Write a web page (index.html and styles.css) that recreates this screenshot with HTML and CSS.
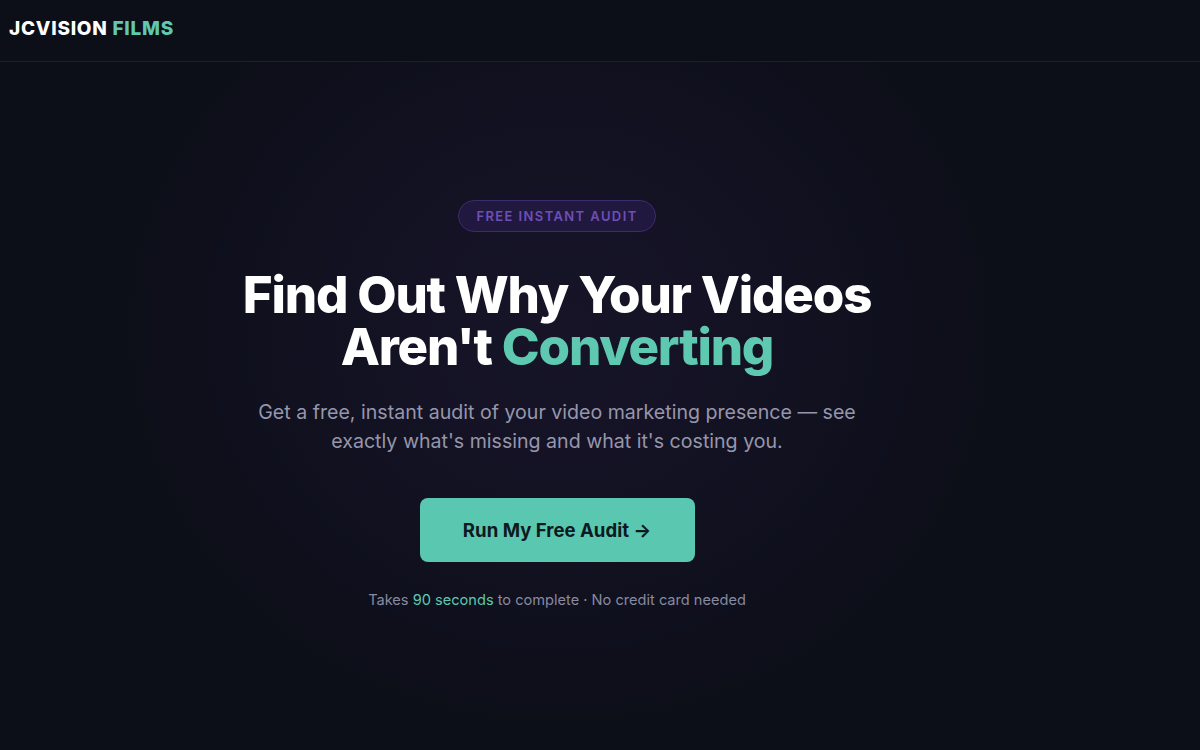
FILE: index.html
```html
<!DOCTYPE html>
<html lang="en">
<head>
<meta charset="utf-8">
<title>JCVision Films — Free Video Audit</title>
<link rel="stylesheet" href="styles.css">
</head>
<body>
<header class="topbar">
  <div class="logo">JCVISION <span class="accent">FILMS</span></div>
</header>
<main class="hero">
  <div class="badge">FREE INSTANT AUDIT</div>
  <h1 class="headline">Find Out Why Your Videos<br>Aren't <span class="accent">Converting</span></h1>
  <p class="sub">Get a free, instant audit of your video marketing presence — see exactly what's missing and what it's costing you.</p>
  <a class="cta" href="#">Run My Free Audit →</a>
  <p class="note">Takes <span class="accent">90 seconds</span> to complete · No credit card needed</p>
</main>
</body>
</html>
```
FILE: styles.css
```css
* { box-sizing: border-box; }
html, body { margin: 0; padding: 0; }
body {
  width: 1200px;
  height: 750px;
  overflow: hidden;
  font-family: Inter, "Noto Sans", sans-serif;
  color: #ffffff;
  background-color: #0c0e18;
  background-image: radial-gradient(ellipse 440px 400px at 560px 330px, #171428 0%, #131223 45%, #0c0e18 100%);
}
.accent { color: #5ec8b0; }
.topbar {
  height: 62px;
  border-bottom: 1px solid #1d1f2c;
  display: flex;
  align-items: center;
  padding: 0 9px;
  background: #0c0e18;
}
.logo {
  font-size: 19px;
  font-weight: 800;
  letter-spacing: 0.75px;
  color: #ffffff;
  margin-top: -5px;
}
.hero {
  display: flex;
  flex-direction: column;
  align-items: center;
  text-align: center;
  padding-top: 138px;
  padding-right: 86px;
}
.badge {
  height: 32px;
  padding: 0 17px;
  display: flex;
  align-items: center;
  border-radius: 16px;
  background: #21183f;
  border: 1px solid #3b2c6a;
  color: #6d4fb6;
  font-size: 13px;
  font-weight: 600;
  letter-spacing: 1.4px;
}
.headline {
  margin: 37px 0 0;
  font-size: 51px;
  font-weight: 800;
  line-height: 52px;
  letter-spacing: -1.2px;
  color: #ffffff;
}
.sub {
  margin: 25px 0 0;
  width: 640px;
  font-size: 19.6px;
  line-height: 29px;
  color: #9696ac;
}
.cta {
  margin-top: 42px;
  width: 275px;
  height: 64px;
  display: flex;
  align-items: center;
  justify-content: center;
  border-radius: 8px;
  background: #5ac7b0;
  color: #0e1a20;
  font-size: 18.6px;
  font-weight: 700;
  text-decoration: none;
}
.note {
  margin: 29px 0 0;
  font-size: 14.6px;
  color: #878aa0;
}
```
